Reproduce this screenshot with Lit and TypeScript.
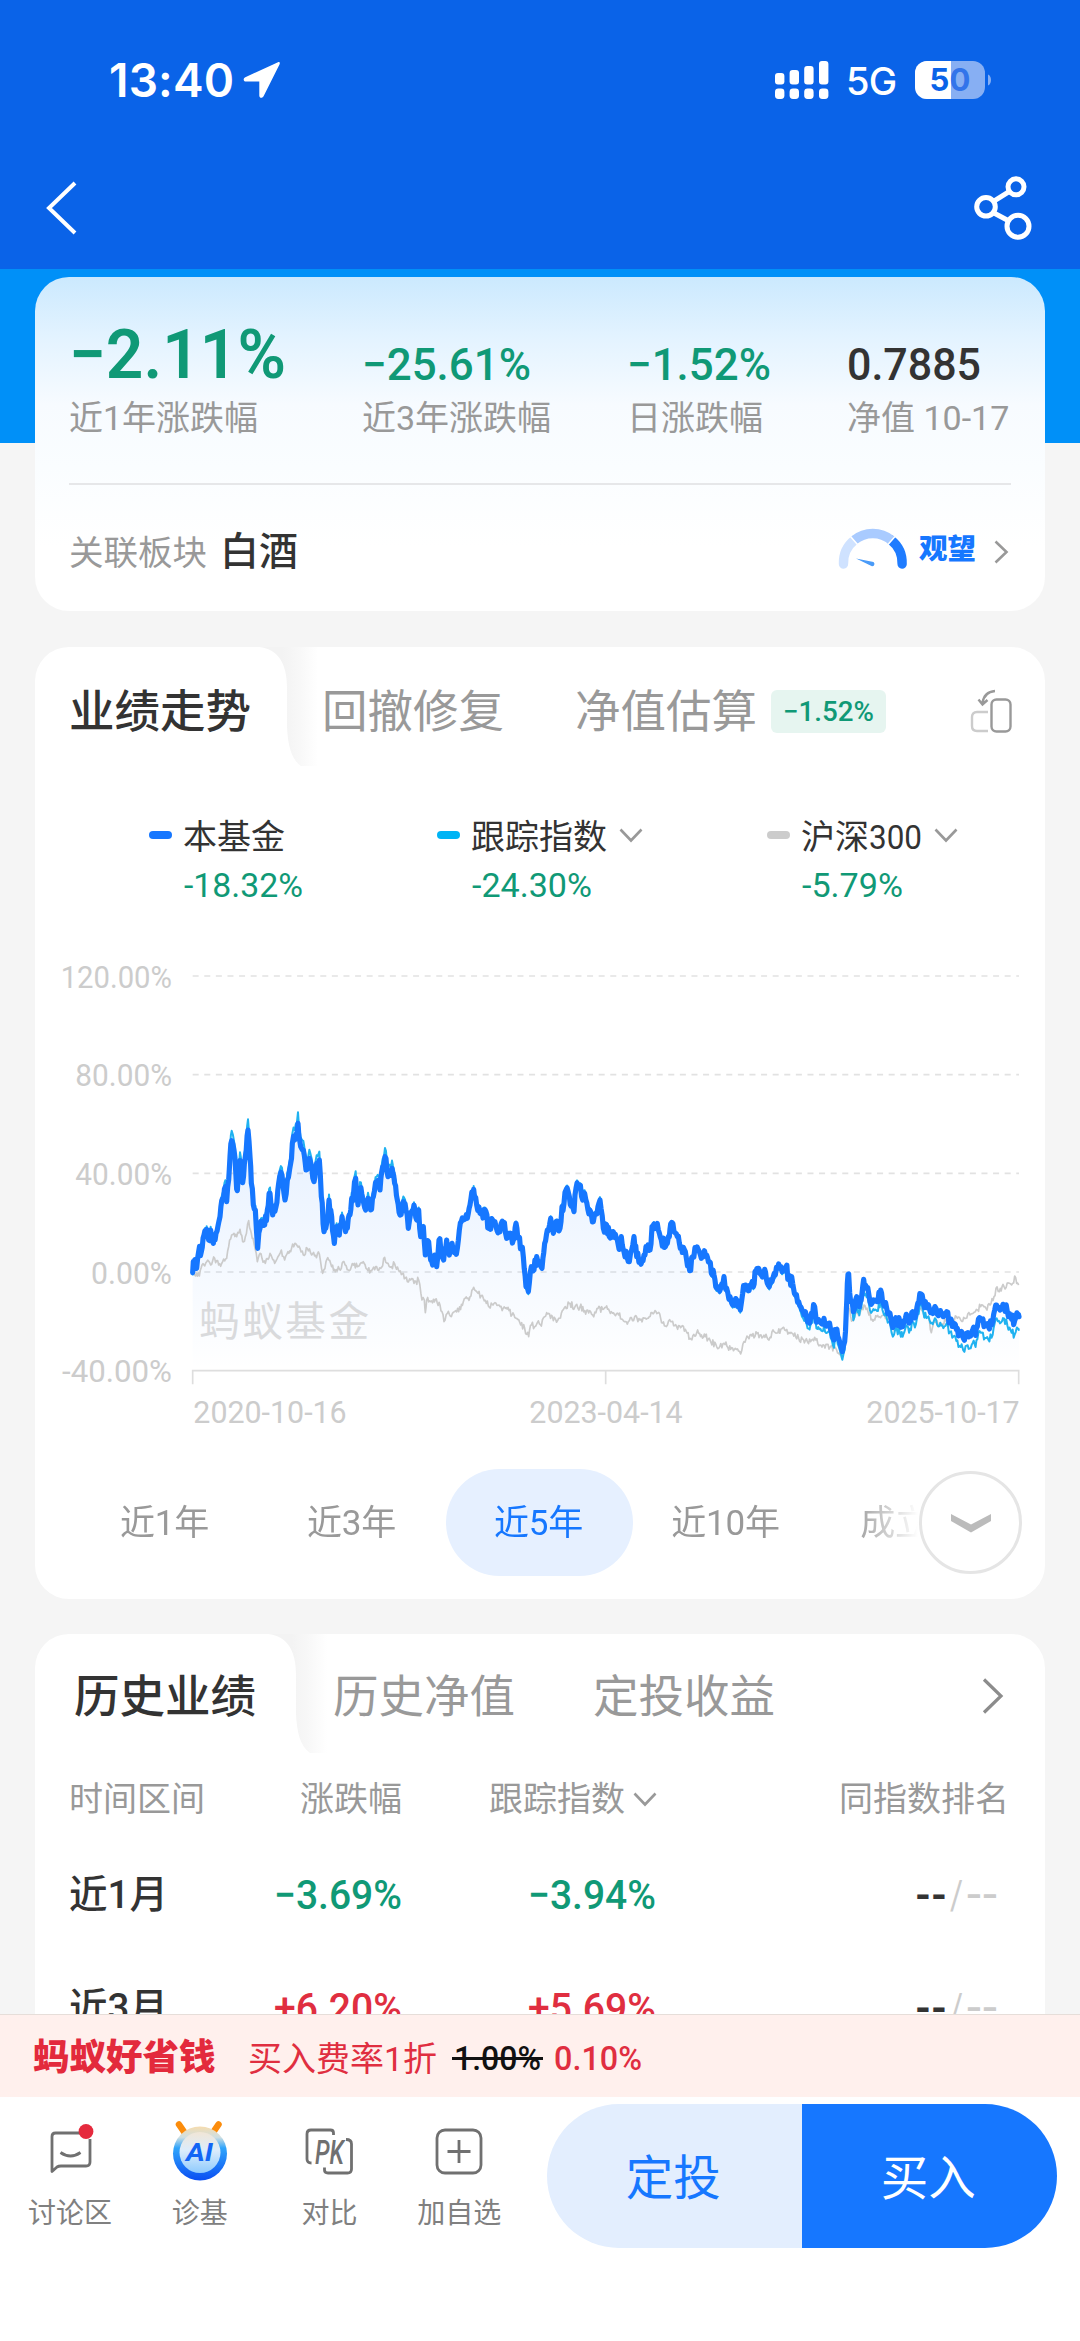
import { LitElement, html, svg, css } from "lit";
import { customElement, property } from "lit/decorators.js";

type Pt = [number, number];

const parse = (s: string, dx = 0): Pt[] =>
  s.trim().split(/\s+/).map((p) => {
    const [x, y] = p.split(",").map(Number);
    return [x + dx, y] as Pt;
  });

/* Series are stored in chart units: 3 units per CSS pixel, 7.4 units per percent, zero at y = 966. */
const FUND: Pt[] = [
  ...parse(`458,968 462,935 470,955 476,905 484,905 492,855 500,838 506,870 512,840 520,880 528,850 540,800 548,745 556,710 560,755 566,690 570,620 575,572 582,600 588,680 592,722 600,632 608,698 616,620 624,540 630,620 634,700 640,765 646,780 653,895 660,835 666,815 674,825 682,780 690,730 698,795 708,770 716,700 726,675 735,750 742,690 752,640 757,580 764,570 774,520 782,590 790,600 798,660 808,625 815,650 822,695 830,640 838,630 844,740 852,845 860,820 867,750 875,800 883,880 890,830 898,855 906,800 914,825 922,835 930,795 935,745 940,740 947,685 954,765 960,715 968,745 977,780 984,745 992,780 1000,740 1010,700 1020,720 1028,650 1035,620 1044,680 1056,655 1064,700 1072,750 1080,795 1090,755 1098,780 1105,835 1112,790 1122,765 1130,810 1136,780 1142,860 1150,830 1156,915 1166,875 1172,930 1178,945 1184,915 1190,950 1197,870 1205,895 1211,930 1220,870 1228,915 1236,880 1246,900 1252,895 1258,840 1270,810 1282,805 1290,765 1301,718 1310,765 1320,790 1338,785 1346,835 1358,810 1368,830 1380,845 1390,820 1400,865 1412,850 1420,870 1428,820 1436,865 1444,890 1450,920 1458,1010 1465,1025 1474,950 1482,960 1490,920 1500,945`),
  ...parse(`6,955 14,880 22,840 32,805 40,850 48,815 60,835 66,770 72,760 78,720 88,740 102,785 108,715 118,710 128,750 134,730 144,780 152,785 160,815 168,790 180,750 190,835 200,825 208,860 220,845 232,870 240,890 244,860 252,905 268,935 275,900 282,860 290,920 300,930 312,915 318,890 330,900 336,830 342,822 355,840 364,870 376,890 388,860 392,822 402,845 412,860 424,890 436,905 449,962 458,920 465,893 478,905 490,920 500,915 508,935 514,970 522,975 530,1015 542,1015 552,980 560,1015 570,1040 578,1065 590,1050 601,1080 608,1030 616,1005 630,1005 640,1010 645,965 656,955 664,975 674,958 682,1000 688,1010 696,995 706,975 716,942 726,965 738,950 746,985 758,1000 766,1035 776,1055 786,1080 796,1085 806,1115 814,1090 824,1070 832,1115 844,1120 852,1105 862,1125 872,1140 882,1170 888,1140 896,1165 907,1205 914,1175 919,1080 922,1000 926,972 932,1055 940,1085 950,1040 958,1070 966,1030 971,988 980,1015 990,1055 1000,1050 1014,1055 1022,1020 1030,1060 1040,1075 1050,1090 1055,1120 1062,1125 1070,1105 1080,1120 1088,1130 1096,1105 1110,1105 1118,1085 1128,1090 1136,1060 1143,1032 1150,1055 1162,1070 1175,1085 1188,1075 1198,1095 1210,1100 1220,1085 1230,1110 1240,1125 1252,1135 1262,1155 1270,1165 1280,1150 1292,1158 1304,1145 1312,1130 1322,1110 1332,1130 1345,1130 1358,1115 1364,1080 1370,1065 1380,1080 1392,1065 1402,1085 1412,1100 1424,1112 1434,1095 1437,1100`, 1500),
];

const CSI300: Pt[] = [
  ...parse(`458,968 478,978 486,945 500,935 512,945 524,925 536,945 548,935 560,925 566,890 575,855 582,850 590,860 600,838 608,875 616,860 626,812 634,850 642,880 652,935 660,910 666,925 676,940 690,910 704,940 714,920 724,900 734,930 744,905 752,905 758,882 768,882 780,895 790,915 802,895 815,915 838,912 848,970 858,935 866,930 875,950 886,965 895,950 904,955 912,935 925,960 940,945 952,950 964,938 978,955 992,962 1010,950 1022,955 1034,922 1044,940 1054,950 1064,942 1078,965 1090,970 1102,995 1112,990 1122,1000 1136,990 1146,1050 1153,1050 1156,1088 1160,1050 1172,1055 1186,1048 1200,1065 1212,1115 1222,1090 1234,1100 1244,1085 1256,1085 1270,1055 1290,1040 1301,1012 1314,1030 1330,1045 1348,1072 1362,1060 1380,1070 1396,1075 1404,1072 1416,1095 1430,1105 1442,1125 1454,1135 1466,1160 1474,1125 1484,1130 1492,1118`),
  ...parse(`4,1128 14,1100 26,1090 40,1112 56,1105 64,1090 76,1070 90,1060 104,1072 120,1070 134,1082 158,1095 174,1075 188,1078 200,1068 214,1085 236,1095 256,1115 268,1112 284,1100 300,1110 322,1105 336,1088 348,1085 362,1105 376,1128 392,1115 410,1130 436,1138 450,1165 470,1148 496,1160 510,1170 536,1195 552,1180 572,1198 586,1195 602,1212 612,1175 630,1155 660,1155 690,1162 702,1145 734,1140 750,1150 776,1165 796,1172 812,1175 824,1162 840,1185 870,1192 890,1200 907,1215 916,1180 924,1060 932,1100 940,1112 948,1090 960,1090 972,1065 984,1085 996,1108 1010,1100 1030,1095 1046,1105 1056,1130 1066,1140 1080,1120 1100,1110 1118,1095 1130,1100 1143,1075 1156,1100 1168,1110 1174,1148 1180,1122 1200,1118 1220,1115 1240,1110 1252,1105 1262,1110 1274,1105 1290,1095 1306,1085 1322,1070 1338,1075 1350,1065 1362,1040 1368,1015 1378,1025 1392,1010 1408,1000 1418,1000 1424,978 1430,1000 1436,1005`, 1500),
];

/* Tracked index: leads the fund at early peaks and trails it towards the end. */
const INDEX: Pt[] = FUND.map(([x, y]) => {
  if (x < 2200) {
    const k = x < 1100 ? 0.075 : 0.04;
    return [x, y < 966 ? y - (966 - y) * k : y + 8] as Pt;
  }
  const d = x < 2280 ? 8 : 20 + ((x - 2280) / 657) * 22;
  return [x, x > 2415 && x < 2440 ? y : y + d] as Pt;
});

/* Adds small daily moves between the stored points. */
const jitter = (pts: Pt[], amp: number, seed: number): Pt[] => {
  let s = seed;
  const rnd = () => ((s = (s * 16807) % 2147483647) / 2147483647) * 2 - 1;
  const out: Pt[] = [];
  pts.forEach((p, i) => {
    out.push(p);
    const n = pts[i + 1];
    if (!n) return;
    const steps = Math.max(2, Math.round((n[0] - p[0]) / 3));
    for (let k = 1; k < steps; k++) {
      const t = k / steps;
      out.push([p[0] + (n[0] - p[0]) * t, p[1] + (n[1] - p[1]) * t + rnd() * amp]);
    }
  });
  return out;
};

const toPath = (pts: Pt[]) => "M" + pts.map(([x, y]) => `${x.toFixed(1)} ${y.toFixed(1)}`).join("L");

/* One line of figures set to an exact width. */
@customElement("fit-num")
class FitNum extends LitElement {
  @property() text = "";
  @property({ type: Number }) w = 100;
  @property({ type: Number }) h = 40;
  @property({ type: Number }) size = 34;
  @property({ type: Number }) weight = 400;

  static styles = css`
    :host { display: inline-block; flex: none; }
    .box { display: block; overflow: visible; }
    .figures { fill: currentColor; font-family: Roboto, "Liberation Sans", sans-serif; }
  `;

  render() {
    return html`<svg class="box" width=${this.w} height=${this.h}>
      <text class="figures" x="0" y=${this.h / 2 + this.size * 0.3555} font-size=${this.size}
        font-weight=${this.weight} textLength=${this.w} lengthAdjust="spacingAndGlyphs">${this.text}</text>
    </svg>`;
  }
}

@customElement("status-bar")
class StatusBar extends LitElement {
  static styles = css`
    :host { display: block; color: #fff; font-family: Inter, Roboto, sans-serif; }
    .bar { display: flex; align-items: center; height: 160px; padding: 0 88px 0 109px; }
    .time { font-size: 46px; font-weight: 600; line-height: 60px; letter-spacing: 0.2px; width: 133px; white-space: nowrap; }
    .spacer { flex: 1; }
    .net { font-size: 38px; font-weight: 500; line-height: 50px; margin: 2px 0 0 17px; width: 69px; letter-spacing: -0.8px; }
    .icon { display: block; flex: none; }
    .level { font-size: 31px; font-weight: 700; }
    .nav { display: flex; justify-content: space-between; align-items: center; height: 96px; padding: 0 46px 13px 45px; }
  `;

  render() {
    return html`
      <div class="bar">
        <span class="time">13:40</span>
        <svg class="icon" width="40" height="38" viewBox="0 0 40 38">
          <path d="M36 1.300 3.300 16.200C.8 17.400 1.300 20.600 4 20.600H17.300V34.500C17.300 37.300 20.500 37.700 21.700 35.100L37.600 3.200C38.200 1.600 37.400 .7 36 1.300Z" fill="#fff"/>
        </svg>
        <span class="spacer"></span>
        <svg class="icon" width="54" height="38" viewBox="0 0 54 38" fill="#fff">
          <rect x="0" y="12" width="9.400" height="11.500" rx="3"/><rect x="14.600" y="9" width="9.400" height="14.500" rx="3"/>
          <rect x="29.200" y="5" width="9.400" height="18.500" rx="3"/><rect x="44" y="0" width="9.400" height="23.500" rx="3"/>
          <rect x="0" y="27.500" width="9.400" height="10.500" rx="3.400"/><rect x="14.600" y="27.500" width="9.400" height="10.500" rx="3.400"/>
          <rect x="29.200" y="27.500" width="9.400" height="10.500" rx="3.400"/><rect x="44" y="27.500" width="9.400" height="10.500" rx="3.400"/>
        </svg>
        <span class="net">5G</span>
        <svg class="icon" width="77" height="38" viewBox="0 0 77 38">
          <rect x="0" y="0" width="70" height="38" rx="12" fill="#87aff3"/>
          <path d="M12 0H36V38H12A12 12 0 0 1 0 26V12A12 12 0 0 1 12 0Z" fill="#fff"/>
          <path d="M73 13.500c4 1.500 4 9.500 0 11z" fill="#87aff3"/>
          <text class="level" x="14.500" y="30.300" fill="#0a63e8">5</text>
          <text class="level" x="34.500" y="30.300" fill="#3274ea">0</text>
        </svg>
      </div>
      <div class="nav">
        <svg class="icon" width="34" height="56" viewBox="0 0 34 56"><path d="M30 3 4 28 30 53" fill="none" stroke="#fff" stroke-width="4"/></svg>
        <svg class="icon" width="62" height="66" viewBox="972 174.700 62 66" fill="none" stroke="#fff" stroke-width="5">
          <circle cx="1016" cy="186.500" r="8"/><circle cx="986" cy="206.500" r="9.300"/><circle cx="1018" cy="226" r="11"/>
          <path d="M993.500 201 1009.500 191M993.500 212.500 1008.500 220.500"/>
        </svg>
      </div>
    `;
  }
}

@customElement("trend-chart")
class TrendChart extends LitElement {
  static styles = css`
    :host { display: block; }
    .plot { display: block; }
    .label { fill: #ccc; font: 400 93px Roboto, "Liberation Sans", sans-serif; }
    .mark { fill: #d9dadc; font: 400 122px "Noto Sans CJK SC", sans-serif; letter-spacing: 7.500px; }
    .grid { stroke: #e2e2e2; stroke-width: 5; stroke-dasharray: 18 16.8; }
    .axis { stroke: #dedede; stroke-width: 5; fill: none; }
    .fund { fill: none; stroke: #1677ff; stroke-width: 15.500; stroke-linejoin: round; stroke-linecap: round; }
    .index { fill: none; stroke: #1fb2f0; stroke-width: 6; stroke-linejoin: round; }
    .broad { fill: none; stroke: #cbcbcb; stroke-width: 5; stroke-linejoin: round; }
  `;

  render() {
    const fund = jitter(FUND, 17, 77);
    const labels: [string, number, number, number][] = [
      ["120.00%", 62, 78, 334], ["80.00%", 106, 374, 290], ["40.00%", 106, 670, 290],
      ["0.00%", 153, 966, 243], ["-40.00%", 66, 1262, 330],
    ];
    const dates: [string, number][] = [["2020-10-16", 460], ["2023-04-14", 1468], ["2025-10-17", 2479]];
    return html`<svg class="plot" width="1000" height="480" viewBox="0 0 3000 1440">
      <defs><linearGradient id="area" gradientUnits="userSpaceOnUse" x1="0" y1="500" x2="0" y2="1262">
        <stop offset="0" stop-color="#1677ff" stop-opacity="0.11"/><stop offset="1" stop-color="#1677ff" stop-opacity="0"/>
      </linearGradient></defs>
      ${[78, 374, 670, 966].map((y) => svg`<path class="grid" d="M458 ${y}H2937"/>`)}
      ${labels.map(([t, x, y, w]) => svg`<text class="label" x=${x} y=${y + 35} textLength=${w} lengthAdjust="spacingAndGlyphs">${t}</text>`)}
      ${dates.map(([t, x]) => svg`<text class="label" x=${x} y="1418" textLength="460" lengthAdjust="spacingAndGlyphs">${t}</text>`)}
      <path d="${toPath(fund)}L2937 1262L458 1262Z" fill="url(#area)"/>
      <text class="mark" x="477" y="1158">蚂蚁基金</text>
      <path class="axis" d="M458 1303V1262H2936V1303M1697 1262V1303"/>
      <path class="broad" d=${toPath(jitter(CSI300, 10, 5))}/>
      <path class="index" d=${toPath(jitter(INDEX, 14, 77))}/>
      <path class="fund" d=${toPath(fund)}/>
    </svg>`;
  }
}

const caret = (w = 24, h = 15, color = "#999") =>
  html`<svg width=${w} height=${h} viewBox="0 0 24 15"><path d="M1.500 1.500 12 12.500 22.500 1.500" fill="none" stroke=${color} stroke-width="2.600"/></svg>`;

const tabEdge = () => html`<svg width="70" height="119" viewBox="0 0 70 119">
  <defs><linearGradient id="g" x1="0" x2="1" y1="0" y2="0">
    <stop offset="0.450" stop-color="#f3f3f3"/><stop offset="0.700" stop-color="#f8f8f8"/><stop offset="0.960" stop-color="#fff"/>
  </linearGradient></defs>
  <path d="M0 0H70V119H0Z" fill="url(#g)"/>
  <path d="M0 0H8C28 2 36 18 36 40V80C37 98 40 112 50 119H0Z" fill="#fff"/>
</svg>`;

@customElement("app-root")
class AppRoot extends LitElement {
  static styles = css`
    :host {
      display: flex; flex-direction: column; width: 1080px; height: 2341px; overflow: hidden;
      background: #f5f5f5; color: #333; font-family: Roboto, "Noto Sans CJK SC", sans-serif;
    }
    svg { display: block; flex: none; }
    .header { flex: none; height: 269px; background: #0a63e8; }
    .header status-bar { display: block; }
    .content {
      flex: 1; min-height: 0; overflow: hidden; padding: 8px 35px 0;
      background: linear-gradient(#0090f8 0 174px, #f5f5f5 174px);
    }
    .card { background: #fff; border-radius: 34px; overflow: hidden; }
    .green { color: #109976; }
    .red { color: #e02e40; }
    .dark { color: #333; }

    .summary { height: 334px; box-sizing: border-box; padding: 46px 34px 0; background: linear-gradient(#cbe9fe 0, #e3f3ff 60px, #f7fbff 128px, #fafdff 190px, #fff 270px); }
    .stats { display: grid; grid-template-columns: 293px 265px 220px 1fr; }
    .stat { display: flex; flex-direction: column; }
    .figure { display: flex; align-items: flex-end; height: 60px; }
    .caption { margin-top: 13px; font-size: 34px; line-height: 44px; color: #999; white-space: nowrap; }
    .rule { height: 2px; margin-top: 43px; background: #e6e7e9; }
    .sector { display: flex; align-items: center; height: 126px; box-sizing: border-box; padding: 8px 2px 0 0; }
    .sector-label { font-size: 34.500px; line-height: 46px; color: #999; padding-top: 2px; }
    .sector-name { margin-left: 13px; font-size: 39px; line-height: 48px; font-weight: 500; flex: 1; }
    .mood { margin: 0 18px 4px 11px; font-size: 28.500px; line-height: 40px; font-weight: 900; color: #1677ff; }
    .mood-row { display: flex; align-items: center; }
    .mood-row .gauge { margin-bottom: 6px; }

    .trend { margin-top: 36px; height: 952px; }
    .tabs { display: flex; align-items: center; height: 119px; font-size: 45.500px; line-height: 60px; color: #999; white-space: nowrap; }
    .tab { padding-top: 13px; }
    .tab.on { padding-left: 34px; width: 182px; color: #333; font-weight: 500; }
    .after-edge { margin-left: 1px; width: 182px; }
    .third { margin-left: 71px; width: 182px; }
    .chip { display: flex; justify-content: center; align-items: center; width: 115px; height: 43px; margin: 9px 0 0 14px; border-radius: 6px; background: #e6f5f0; }
    .rotate { margin: 9px 0 0 84px; }

    .legend { display: grid; grid-template-columns: 288px 330px 1fr; margin-top: 49px; padding-left: 114px; }
    .series { display: flex; align-items: center; height: 44px; font-size: 34px; line-height: 44px; white-space: nowrap; }
    .dash { width: 23px; height: 8px; margin: 0 11px 4px 0; border-radius: 4px; background: #1677ff; }
    .dash.cyan { background: #00b4f5; }
    .dash.gray { background: #ccc; }
    .series svg { margin: 0 0 4px 12px; }
    .value { display: block; margin: 9px 0 0 35px; }
    .chart { margin: 48px 0 0 5px; }

    .ranges { display: flex; align-items: center; margin: 39px 0 0 37px; height: 107px; }
    .scroller { display: flex; width: 847px; overflow: hidden; font-size: 35px; mask-image: linear-gradient(90deg, #000 780px, transparent 846px); }
    .range { flex: none; width: 187px; height: 107px; line-height: 110px; border-radius: 54px; text-align: center; color: #999; letter-spacing: -0.200px; text-indent: -2px; }
    .range.on { background: #e6f0ff; color: #1677ff; }
    .more { display: flex; justify-content: center; align-items: center; width: 97px; height: 97px; border: 3px solid #e5e5e5; border-radius: 50%; }

    .history { margin-top: 35px; height: 460px; }
    .history .tab { padding-top: 8px; }
    .history .tab.on { padding-left: 39px; width: 186px; }
    .history .third { margin-left: 77px; }
    .history .after-edge { margin-left: 3px; width: 183px; }
    .go { margin: 5px 0 0 207px; }
    .row { display: grid; grid-template-columns: 160px 173px 255px 1fr; align-items: center; height: 113px; padding: 0 36px 0 34px; }
    .row.head { height: 84px; font-size: 34px; line-height: 44px; color: #999; }
    .head span { padding-top: 8px; }
    .right { display: flex; justify-content: flex-end; align-items: center; white-space: nowrap; }
    .right.gap { padding-right: 1px; }
    .right.rank { padding-right: 11px; gap: 3px; color: #ccc; }
    .right svg { margin-left: 8px; }
    .period { font-size: 38.500px; font-weight: 500; line-height: 50px; padding-top: 2px; }

    .footer { flex: none; height: 327px; background: #fff; }
    .promo { display: flex; align-items: center; height: 83px; box-sizing: border-box; border-top: 1px solid #e6ded9; padding: 4px 0 0 33px; background: #fff0ed; color: #e02e40; }
    .brand { width: 215px; font-size: 36.500px; font-weight: 900; line-height: 48px; white-space: nowrap; color: #e32a3c; }
    .rate { font-size: 34px; line-height: 44px; width: 204px; white-space: nowrap; padding-top: 2px; }
    .old { display: flex; width: 91px; justify-content: center; color: #111; margin-right: 11px; background: linear-gradient(transparent 19px, #111 19px 22px, transparent 22px); }
    .actions { display: flex; padding-left: 5px; }
    .action { display: flex; flex-direction: column; align-items: center; width: 129.800px; padding-top: 24px; font-size: 28px; line-height: 36px; color: #808080; }
    .action span { margin-top: 15px; }
    .buttons { display: flex; width: 510px; height: 144px; margin: 7px 0 0 23px; border-radius: 72px; overflow: hidden; font-size: 47.500px; line-height: 150px; text-align: center; }
    .invest { width: 255px; background: #e3eefe; color: #1677ff; text-indent: -3px; }
    .buy { width: 255px; background: #1677ff; color: #fff; text-indent: -3px; }
    .ai { font: italic 700 25px Roboto, sans-serif; }
    .pk { font: italic 500 34px Roboto, sans-serif; fill: #707070; }
  `;

  private stat(text: string, w: number, caption: string, cls = "green", size = 45, h = 38) {
    return html`<div class="stat">
      <div class="figure ${cls}"><fit-num .text=${text} .w=${w} .h=${h} .size=${size} .weight=${size > 60 ? 600 : 500}></fit-num></div>
      <div class="caption">${caption}</div>
    </div>`;
  }

  private series(name: unknown, value: string, w: number, tone: string, menu: boolean) {
    return html`<div>
      <div class="series"><i class="dash ${tone}"></i>${name}${menu ? caret() : ""}</div>
      <fit-num class="value green" .text=${value} .w=${w} .h=${34} .size=${33}></fit-num>
    </div>`;
  }

  private row(period: string, a: string, b: string, cls: string) {
    return html`<div class="row">
      <span class="period">${period}</span>
      <span class="right ${cls}"><fit-num .text=${a} .w=${128} .size=${41} .weight=${500}></fit-num></span>
      <span class="right gap ${cls}"><fit-num .text=${b} .w=${128} .size=${41} .weight=${500}></fit-num></span>
      <span class="right rank"><fit-num class="dark" .text=${"--"} .w=${32} .size=${41} .weight=${700}></fit-num><fit-num .text=${"/"} .w=${13} .size=${41}></fit-num><fit-num .text=${"--"} .w=${32} .size=${41} .weight=${500}></fit-num></span>
    </div>`;
  }

  render() {
    return html`
      <div class="header"><status-bar></status-bar></div>
      <div class="content">
        <section class="card summary">
          <div class="stats">
            ${this.stat("−2.11%", 217, "近1年涨跌幅", "green", 69, 60)}
            ${this.stat("−25.61%", 169, "近3年涨跌幅")}
            ${this.stat("−1.52%", 144, "日涨跌幅")}
            ${this.stat("0.7885", 134, "净值 10-17", "dark")}
          </div>
          <div class="rule"></div>
          <div class="sector">
            <span class="sector-label">关联板块</span><span class="sector-name">白酒</span>
            <div class="mood-row">
              <svg class="gauge" width="70" height="42" viewBox="0 0 70 42" fill="none" stroke-width="9.400">
                <path d="M5.500 36A29.300 29.300 0 0 1 16.500 12" stroke="#cfe2ff" stroke-linecap="round"/>
                <path d="M64.100 36A29.300 29.300 0 0 0 53 12" stroke="#1f7cff" stroke-linecap="round"/>
                <path d="M16.200 12.200A29.300 29.300 0 0 1 53.400 12.200" stroke="#a9cbff"/>
                <path d="M12.500 8.500 19.500 16.500M57 8.500 50 16.500" stroke="#fff" stroke-width="1.500"/>
                <path d="M18 30.500 35.500 34A2.400 2.400 0 0 1 34 38.300Z" fill="#4a9bf8"/>
              </svg>
              <span class="mood">观望</span>
              <svg width="15" height="24" viewBox="0 0 15 24"><path d="M1.500 1.500 12.500 12 1.500 22.500" fill="none" stroke="#999" stroke-width="2.600"/></svg>
            </div>
          </div>
        </section>

        <section class="card trend">
          <div class="tabs">
            <span class="tab on">业绩走势</span>${tabEdge()}
            <span class="tab after-edge">回撤修复</span>
            <span class="tab third">净值估算</span>
            <span class="chip green"><fit-num .text=${"−1.52%"} .w=${91} .h=${36} .size=${28} .weight=${500}></fit-num></span>
            <svg class="rotate" width="43" height="45" viewBox="0 0 43 45" fill="none" stroke-width="2.400">
              <path d="M18 23H7Q2 23 2 28V37Q2 42 7 42H18" stroke="#ccc"/>
              <rect x="21.500" y="10.500" width="19" height="32" rx="5" stroke="#999"/>
              <path d="M25 2Q14 3 12.500 14M8.500 10.500 12.500 15.500 17.500 11" stroke="#999"/>
            </svg>
          </div>
          <div class="legend">
            ${this.series("本基金", "-18.32%", 119, "", false)}
            ${this.series("跟踪指数", "-24.30%", 120, "cyan", true)}
            ${this.series(html`沪深<fit-num .text=${"300"} .w=${53} .h=${42} .size=${34}></fit-num>`, "-5.79%", 101, "gray", true)}
          </div>
          <trend-chart class="chart"></trend-chart>
          <div class="ranges">
            <div class="scroller">
              ${["近1年", "近3年", "近5年", "近10年", "成立来"].map(
                (r) => html`<span class="range ${r === "近5年" ? "on" : ""}">${r}</span>`)}
            </div>
            <div class="more"><svg width="40" height="20" viewBox="0 0 40 20"><path d="M0 1 20 11.500 40 1V8L20 19.500 0 8Z" fill="#bbb"/></svg></div>
          </div>
        </section>

        <section class="card history">
          <div class="tabs">
            <span class="tab on">历史业绩</span>${tabEdge()}
            <span class="tab after-edge">历史净值</span>
            <span class="tab third">定投收益</span>
            <svg class="go" width="22" height="36" viewBox="0 0 22 36"><path d="M2 1.500 19 18 2 34.500" fill="none" stroke="#8c8c8c" stroke-width="3.200"/></svg>
          </div>
          <div class="row head">
            <span>时间区间</span><span class="right">涨跌幅</span>
            <span class="right">跟踪指数${caret()}</span><span class="right">同指数排名</span>
          </div>
          ${this.row("近1月", "−3.69%", "−3.94%", "green")}
          ${this.row("近3月", "+6.20%", "+5.69%", "red")}
        </section>
      </div>

      <div class="footer">
        <div class="promo">
          <span class="brand">蚂蚁好省钱</span>
          <span class="rate">买入费率1折</span>
          <span class="old"><fit-num .text=${"1.00%"} .w=${87} .size=${33} .weight=${500}></fit-num></span>
          <fit-num .text=${"0.10%"} .w=${88} .size=${33} .weight=${500}></fit-num>
        </div>
        <div class="actions">
          <div class="action">
            <svg width="60" height="60" viewBox="0 0 60 60" fill="none" stroke="#707070" stroke-width="2.800">
              <path d="M40 12H15.500Q12 12 12 15.500V50.500L17 46Q18.500 45 21 45H46Q50 45 50 41V18" stroke-linejoin="round"/>
              <path d="M20.500 31.500Q30.500 38.500 40.500 31.500"/>
              <circle cx="46" cy="10.500" r="7.400" fill="#e52a3d" stroke="none"/>
            </svg><span>讨论区</span>
          </div>
          <div class="action">
            <svg width="60" height="60" viewBox="0 0 60 60">
              <defs>
                <linearGradient id="ball" x1="0" y1="0" x2="0" y2="1"><stop offset="0" stop-color="#f6dcae"/><stop offset=".2" stop-color="#cfdfe2"/><stop offset=".4" stop-color="#2fa4fb"/><stop offset="1" stop-color="#0a4ef2"/></linearGradient>
                <linearGradient id="face" x1="0" y1="0" x2="0" y2="1"><stop offset="0" stop-color="#f1e6d6"/><stop offset=".45" stop-color="#dbecfc"/><stop offset="1" stop-color="#8fcbfd"/></linearGradient>
              </defs>
              <path d="M9 3.500 15.500 13M48.500 3.500 42 13" stroke="#fb8c0c" stroke-width="6.500" stroke-linecap="round"/>
              <circle cx="30" cy="32.500" r="27" fill="url(#ball)"/>
              <circle cx="30" cy="31.500" r="20.500" fill="url(#face)"/>
              <text class="ai" x="16" y="40" fill="#1265f5" textLength="27" lengthAdjust="spacingAndGlyphs">AI</text>
            </svg><span>诊基</span>
          </div>
          <div class="action">
            <svg width="60" height="60" viewBox="0 0 60 60" fill="none" stroke="#707070" stroke-width="2.800">
              <path d="M34.500 14V12Q34.500 9 31.500 9H12Q8 9 8 13V38Q8 42 12.500 42"/>
              <path d="M47 18.500Q52.500 18.500 52.500 23V48Q52.500 52 48.500 52H29Q25.500 52 25.500 49V46.500"/>
              <text class="pk" x="16" y="42.500" stroke="none" textLength="29" lengthAdjust="spacingAndGlyphs">PK</text>
            </svg><span>对比</span>
          </div>
          <div class="action">
            <svg width="60" height="60" viewBox="0 0 60 60" fill="none" stroke="#707070" stroke-width="2.800">
              <rect x="8" y="9" width="44" height="43" rx="8"/><path d="M30 19V42M18.500 30.500H41.500"/>
            </svg><span>加自选</span>
          </div>
          <div class="buttons"><span class="invest">定投</span><span class="buy">买入</span></div>
        </div>
      </div>
    `;
  }
}
